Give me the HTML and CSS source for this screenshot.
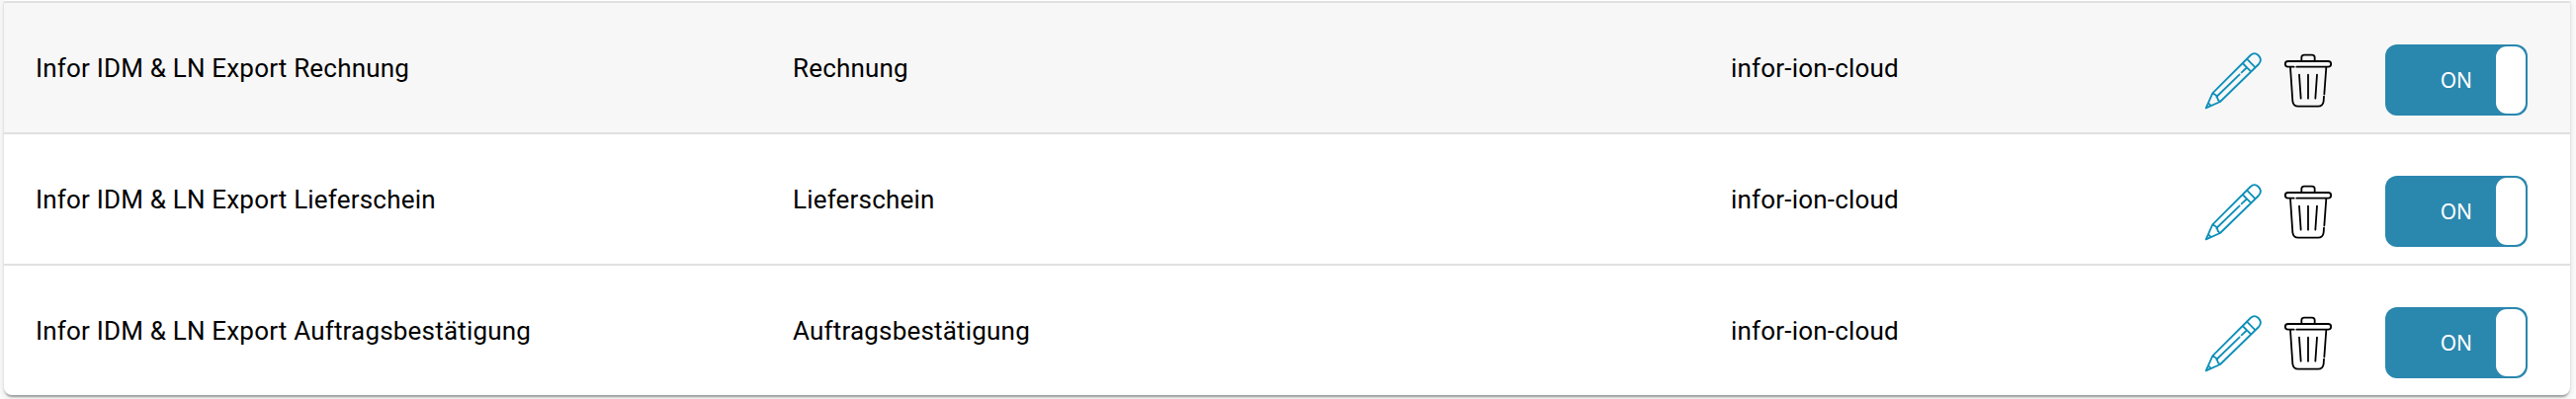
FILE: index.html
```
<!DOCTYPE html>
<html lang="de">
<head>
<meta charset="utf-8">
<title>Export</title>
<link rel="stylesheet" href="styles.css">
</head>
<body>
<svg class="defs" aria-hidden="true">
  <symbol id="pencil" viewBox="0 0 186 186">
    <path d="M11 178 31 133 146 18Q158 7 170 18Q183 31 171 45L54 159ZM31 133 43 140 48 154 54 159M43 144 113 76M119 70 133 57M122 42 148 68M135 29 161 55M18 163 26 171"/>
  </symbol>
  <symbol id="trash" viewBox="0 0 162 186">
    <path d="M61 35V25Q61 17 69 17H93Q101 17 101 25V35M38 53H20A8 8 0 0 1 20 36H142A8 8 0 0 1 142 53H46M27 54 34 157Q36 173 51 173H111Q126 173 128 157L129 143M130 136 136 54M54 77 59 149M81 77V149M108 77 103 149"/>
  </symbol>
</svg>
<main class="card">
  <div class="row active">
    <span class="name">Infor IDM &amp; LN Export Rechnung</span>
    <span class="type">Rechnung</span>
    <span class="target">infor-ion-cloud</span>
    <div class="actions">
      <svg class="icon pencil"><use href="#pencil"/></svg>
      <svg class="icon trash"><use href="#trash"/></svg>
      <div class="toggle"><span class="state">ON</span><span class="knob"></span></div>
    </div>
  </div>
  <div class="row">
    <span class="name">Infor IDM &amp; LN Export Lieferschein</span>
    <span class="type">Lieferschein</span>
    <span class="target">infor-ion-cloud</span>
    <div class="actions">
      <svg class="icon pencil"><use href="#pencil"/></svg>
      <svg class="icon trash"><use href="#trash"/></svg>
      <div class="toggle"><span class="state">ON</span><span class="knob"></span></div>
    </div>
  </div>
  <div class="row">
    <span class="name">Infor IDM &amp; LN Export Auftragsbestätigung</span>
    <span class="type">Auftragsbestätigung</span>
    <span class="target">infor-ion-cloud</span>
    <div class="actions">
      <svg class="icon pencil"><use href="#pencil"/></svg>
      <svg class="icon trash"><use href="#trash"/></svg>
      <div class="toggle"><span class="state">ON</span><span class="knob"></span></div>
    </div>
  </div>
</main>
</body>
</html>
```
FILE: styles.css
```
body {
  margin: 0;
  height: 404px;
  overflow: hidden;
  background: #fafafa;
  color: #000;
  font-family: Roboto, sans-serif;
  font-size: 26px;
  letter-spacing: 0.19px;
}
.defs { position: absolute; width: 0; height: 0; }
.card {
  box-sizing: border-box;
  height: 400px;
  margin: 0 6px 0 4px;
  padding-top: 1px;
  background: #fff;
  border-radius: 0 0 8px 8px;
  box-shadow: 0 4px 2px -2px rgba(0, 0, 0, .2), 0 2px 2px rgba(0, 0, 0, .14), 0 2px 6px rgba(0, 0, 0, .12);
}
.row {
  box-sizing: border-box;
  display: grid;
  grid-template-columns: 766px 949px 471px 1fr;
  align-items: start;
  height: 133px;
  padding-left: 32px;
  border-top: 2px solid #e0e0e0;
  line-height: 32px;
}
.active { background: #f7f7f7; }
.name, .type, .target { padding-top: 50px; }
.actions { display: flex; padding: 42px 0 0 6px; }
.icon { fill: none; stroke-linecap: round; stroke-linejoin: round; height: 62px; margin-top: 5px; }
.pencil { width: 62px; stroke: #0b8fb8; stroke-width: 5.4; }
.trash { width: 54px; margin-left: 18px; stroke: #000; stroke-width: 5.4; }
.toggle {
  box-sizing: border-box;
  display: flex;
  justify-content: flex-end;
  align-items: center;
  width: 144px;
  height: 72px;
  margin-left: 51px;
  padding: 2px;
  border-radius: 12px;
  background: #2a87ae;
}
.state {
  margin-right: 24px;
  color: #fff;
  font: 21px/32px "Noto Sans", "Open Sans", sans-serif;
  letter-spacing: 0;
}
.knob { width: 30px; height: 68px; border-radius: 11px; background: #fff; }
```
